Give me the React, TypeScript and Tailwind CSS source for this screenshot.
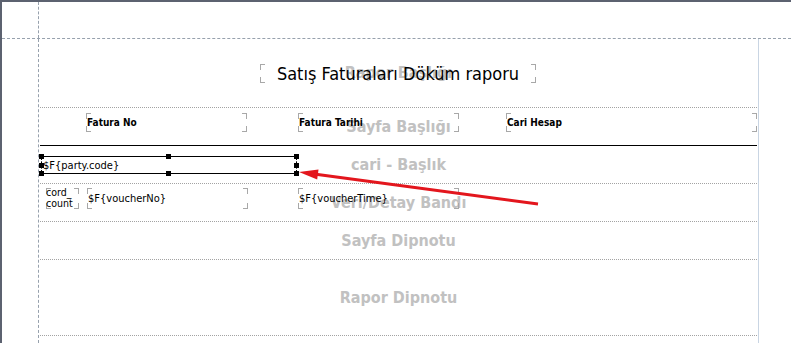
import type { ReactNode } from 'react';

const font = "font-['DejaVu_Sans_Condensed','DejaVu_Sans',sans-serif]";

function Corners() {
    return (
        <>
            <span className="absolute left-0 top-0 w-[5px] h-[6px] border-l border-t border-[#a8a8a8]" />
            <span className="absolute right-0 top-0 w-[5px] h-[6px] border-r border-t border-[#a8a8a8]" />
            <span className="absolute left-0 bottom-0 w-[5px] h-[6px] border-l border-b border-[#a8a8a8]" />
            <span className="absolute right-0 bottom-0 w-[5px] h-[6px] border-r border-b border-[#a8a8a8]" />
        </>
    );
}

function Field({ className, children }: { className: string; children?: ReactNode }) {
    return (
        <div className={`relative shrink-0 flex items-center text-black leading-none ${className}`}>
            <Corners />
            <span className="relative pl-px whitespace-nowrap">{children}</span>
        </div>
    );
}

function Band({ label, className, children }: { label: string; className: string; children?: ReactNode }) {
    return (
        <div className={`relative mx-px ${className}`}>
            <div className="absolute inset-0 flex items-center justify-center text-[16px] font-bold text-[#c1c1c1] whitespace-nowrap">
                {label}
            </div>
            <div className="relative h-full flex items-start">{children}</div>
        </div>
    );
}

function Handle({ className }: { className: string }) {
    return <span className={`absolute w-[5px] h-[5px] bg-black ${className}`} />;
}

export default function App() {
    return (
        <div className={`relative w-[791px] h-[343px] overflow-hidden bg-white ${font}`}>
            <div className="w-full h-full flex flex-col border-t-2 border-l-2 border-[#5c6270]">
                {/* top margin */}
                <div className="h-[37px] shrink-0 flex border-b border-dashed border-[#97a1ad]">
                    <div className="w-[37px] shrink-0 border-r border-dashed border-[#97a1ad]" />
                </div>

                <div className="flex-1 flex">
                    <div className="w-[37px] shrink-0 border-r border-dashed border-[#97a1ad]" />

                    {/* page */}
                    <div className="w-[720px] shrink-0 flex flex-col border-r border-[#c9d5e3]">
                        <Band label="Rapor Başlığı" className="h-[69px] border-b border-dotted border-[#a3a3a3]">
                            <div className="relative mt-[25px] ml-[220px] w-[276px] h-[19px] flex items-center justify-center text-[18px] text-black">
                                <Corners />
                                <span className="relative whitespace-nowrap">Satış Faturaları Döküm raporu</span>
                            </div>
                        </Band>

                        <Band label="Sayfa Başlığı" className="h-[38px] border-b border-black">
                            <div className="flex pt-[5px] font-bold text-[10px]">
                                <Field className="ml-[46px] w-[161px] h-[19px]">Fatura No</Field>
                                <Field className="ml-[51px] w-[161px] h-[19px]">Fatura Tarihi</Field>
                                <Field className="ml-[47px] w-[251px] h-[19px]">Cari Hesap</Field>
                            </div>
                        </Band>

                        <Band label="cari - Başlık" className="h-[38px] border-b border-dotted border-[#a3a3a3]">
                            <div className="relative mt-[10px] ml-[2px] w-[254px] h-[18px] flex items-center border-y border-black">
                                <span className="absolute -left-px top-0 bottom-0 border-l border-dashed border-black" />
                                <span className="absolute -right-px top-0 bottom-0 border-r border-dashed border-black" />
                                <span className="relative pl-px text-[11px] leading-none text-black whitespace-nowrap">$F{'{'}party.code{'}'}</span>
                                <Handle className="-left-[3px] -top-[3px]" />
                                <Handle className="left-[124px] -top-[3px]" />
                                <Handle className="-right-[3px] -top-[3px]" />
                                <Handle className="-left-[3px] top-[6px]" />
                                <Handle className="-right-[3px] top-[6px]" />
                                <Handle className="-left-[3px] -bottom-[3px]" />
                                <Handle className="left-[124px] -bottom-[3px]" />
                                <Handle className="-right-[3px] -bottom-[3px]" />
                            </div>
                        </Band>

                        <Band label="Veri/Detay Bandı" className="h-[38px] border-b border-dotted border-[#a3a3a3]">
                            <div className="flex pt-[4px] text-[11px]">
                                <div className="relative ml-[6px] w-[33px] h-[21px] shrink-0 text-[10.5px] leading-[11px] text-black whitespace-nowrap">
                                    <Corners />
                                    <div className="relative -mt-px">cord_</div>
                                    <div className="relative">count</div>
                                </div>
                                <Field className="ml-[8px] w-[161px] h-[21px]">$F{'{'}voucherNo{'}'}</Field>
                                <Field className="ml-[50px] w-[161px] h-[21px]">$F{'{'}voucherTime{'}'}</Field>
                            </div>
                        </Band>

                        <Band label="Sayfa Dipnotu" className="h-[38px] border-b border-dotted border-[#a3a3a3]" />

                        <Band label="Rapor Dipnotu" className="h-[76px] border-b border-dotted border-[#a3a3a3]" />
                    </div>
                </div>
            </div>

            {/* annotation arrow */}
            <svg className="absolute left-0 top-0 pointer-events-none" width="791" height="343" viewBox="0 0 791 343">
                <line x1="538" y1="204" x2="314" y2="174" stroke="#e3161d" strokeWidth="3" />
                <polygon points="299,172 317.2,179.5 318.5,169.6" fill="#e3161d" />
            </svg>
        </div>
    );
}
